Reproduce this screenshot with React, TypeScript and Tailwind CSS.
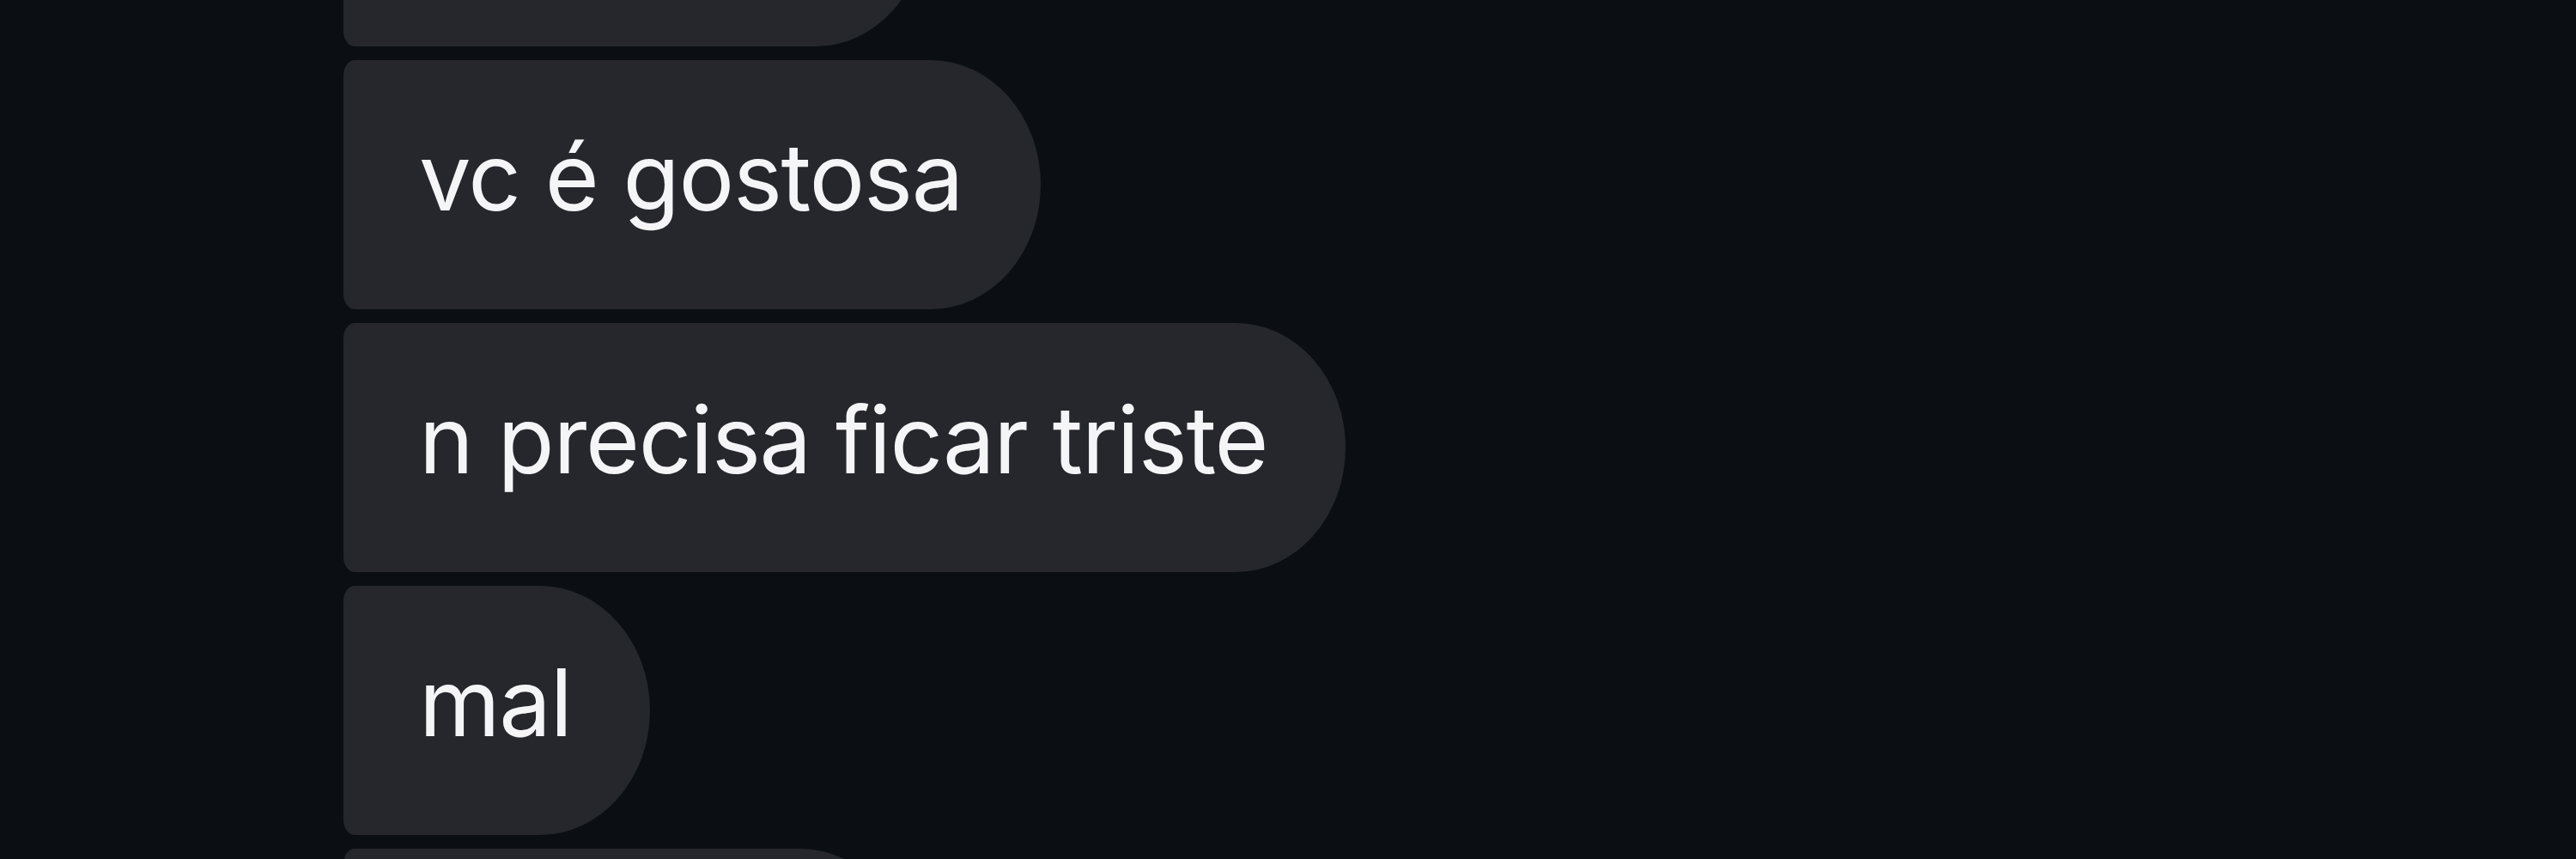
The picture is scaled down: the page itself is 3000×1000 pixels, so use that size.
import React from "react";

const msgs = ["vc é gostosa", "n precisa ficar triste", "mal"];

const shape =
  "h-[290px] shrink-0 self-start rounded-tl-[13px_18px] rounded-bl-[13px_18px] rounded-tr-[128px_145px] rounded-br-[128px_145px] bg-[#25272d]";

function Bubble({ children }: { children?: React.ReactNode }) {
  return (
    <div className={`flex items-center pl-[88px] pr-[91px] ${shape}`}>
      <span className="whitespace-nowrap pb-[18px] text-[108px] leading-none tracking-[-1.3px] text-[#f5f5f7] [font-family:Inter,'Noto_Sans',sans-serif]">
        {children}
      </span>
    </div>
  );
}

export default function App() {
  return (
    <div className="h-[1000px] w-[3000px] overflow-hidden bg-[#0b0f14]">
      <div className="-mt-[236px] flex flex-col gap-[16px] pl-[400px]">
        <div className={`w-[678px] ${shape}`} />
        {msgs.map((m) => (
          <Bubble key={m}>{m}</Bubble>
        ))}
        <div className={`w-[660px] ${shape}`} />
      </div>
    </div>
  );
}
